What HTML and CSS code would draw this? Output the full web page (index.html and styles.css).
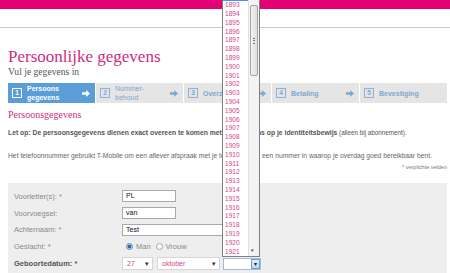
FILE: index.html
```html
<!DOCTYPE html>
<html lang="nl">
<head>
<meta charset="utf-8">
<title>Persoonlijke gegevens</title>
<link rel="stylesheet" href="styles.css">
</head>
<body>
<div class="topbar"></div>
<div class="header"></div>
<main class="content">
  <h1 class="title">Persoonlijke gegevens</h1>
  <p class="subtitle">Vul je gegevens in</p>
  <ol class="steps">
    <li class="step active"><span class="num">1</span><span class="label">Persoons<br>gegevens</span><svg class="arrow" viewBox="0 0 8 7" width="8" height="7"><path d="M0 2.2h4.2V0L8 3.5 4.2 7V4.8H0z"/></svg></li>
    <li class="step"><span class="num">2</span><span class="label thin">Nummer-<br>behoud</span><svg class="arrow" viewBox="0 0 8 7" width="8" height="7"><path d="M0 2.2h4.2V0L8 3.5 4.2 7V4.8H0z"/></svg></li>
    <li class="step"><span class="num">3</span><span class="label">Overzicht</span><svg class="arrow" viewBox="0 0 8 7" width="8" height="7"><path d="M0 2.2h4.2V0L8 3.5 4.2 7V4.8H0z"/></svg></li>
    <li class="step"><span class="num">4</span><span class="label">Betaling</span><svg class="arrow" viewBox="0 0 8 7" width="8" height="7"><path d="M0 2.2h4.2V0L8 3.5 4.2 7V4.8H0z"/></svg></li>
    <li class="step"><span class="num">5</span><span class="label">Bevestiging</span></li>
  </ol>
  <h2 class="section">Persoonsgegevens</h2>
  <p class="note"><b>Let op: De persoonsgegevens dienen exact overeen te komen met de gegevens op je identiteitsbewijs</b> (alleen bij abonnement).</p>
  <p class="info">Het telefoonnummer gebruikt T-Mobile om een aflever afspraak met je te maken. Vul een nummer in waarop je overdag goed bereikbaar bent.</p>
  <p class="required">* verplichte velden</p>
  <form class="panel">
    <div class="row"><span class="lbl">Voorletter(s): *</span><span class="field short">PL</span></div>
    <div class="row"><span class="lbl">Voorvoegsel:</span><span class="field short">van</span></div>
    <div class="row"><span class="lbl">Achternaam: *</span><span class="field long">Test</span></div>
    <div class="row"><span class="lbl">Geslacht: *</span>
      <span class="radios"><span class="radio on"></span><span class="rtext">Man</span><span class="radio"></span><span class="rtext">Vrouw</span></span>
    </div>
    <div class="row"><span class="lbl strong">Geboortedatum: *</span>
      <span class="selects">
        <span class="select day">27<span class="caret">&#9662;</span></span>
        <span class="select month">oktober<span class="caret">&#9662;</span></span>
        <span class="select year"><span class="btn">&#9662;</span></span>
      </span>
    </div>
  </form>
</main>
<div class="year-list">
  <ul class="years">
    <li class="sel">1892</li>
    <li>1893</li><li>1894</li><li>1895</li><li>1896</li><li>1897</li><li>1898</li><li>1899</li><li>1900</li>
    <li>1901</li><li>1902</li><li>1903</li><li>1904</li><li>1905</li><li>1906</li><li>1907</li><li>1908</li>
    <li>1909</li><li>1910</li><li>1911</li><li>1912</li><li>1913</li><li>1914</li><li>1915</li><li>1916</li>
    <li>1917</li><li>1918</li><li>1919</li><li>1920</li><li>1921</li>
  </ul>
  <div class="scrollbar">
    <div class="thumb"><span class="grip"></span></div>
    <span class="down">&#9662;</span>
  </div>
</div>
</body>
</html>
```
FILE: styles.css
```css
html, body {
  margin: 0;
  padding: 0;
  background: #fff;
}
body {
  font-family: "Liberation Sans", Arial, sans-serif;
  color: #666;
  overflow: hidden;
}
.topbar {
  height: 9px;
  background: #e20074;
}
.header {
  height: 18px;
  border-bottom: 1px solid #c9c9c9;
}
.content {
  width: 439px;
  margin-left: 8px;
}
.title {
  margin: 20px 0 0;
  font-family: "Liberation Serif", "Times New Roman", serif;
  font-weight: normal;
  font-size: 17px;
  line-height: 18px;
  color: #cf2c80;
}
.subtitle {
  margin: 0;
  font-family: "Liberation Serif", "Times New Roman", serif;
  font-size: 9.6px;
  line-height: 11px;
  color: #555;
}
.steps {
  list-style: none;
  margin: 6px 0 0;
  padding: 0;
  display: flex;
  gap: 1px;
  height: 20px;
}
.step {
  flex: 1;
  display: flex;
  align-items: center;
  padding: 0 5px 0 4px;
  background: #e5e5e5;
  color: #7ea8d2;
}
.step.active {
  background: #5b9dd6;
  color: #fff;
}
.num {
  width: 8px;
  height: 8px;
  border: 1px solid #8ab1d8;
  font-size: 6.5px;
  font-weight: bold;
  line-height: 8px;
  text-align: center;
}
.step.active .num {
  border-color: #fff;
}
.label {
  margin-left: 5px;
  font-size: 7px;
  font-weight: bold;
  line-height: 9px;
}
.label.thin {
  font-weight: normal;
}
.arrow {
  margin-left: auto;
  fill: currentColor;
}
.step.active .arrow {
  fill: #fff;
}
.section {
  margin: 6px 0 0;
  font-family: "Liberation Serif", "Times New Roman", serif;
  font-weight: normal;
  font-size: 10px;
  line-height: 12px;
  color: #cf2c80;
}
.note {
  margin: 7px 0 0;
  font-size: 6.3px;
  line-height: 9px;
  color: #555;
}
.note b {
  font-size: 6.8px;
}
.info {
  margin: 15px 0 0;
  font-size: 6.75px;
  line-height: 8px;
  color: #666;
}
.required {
  margin: 4px 0 0;
  text-align: right;
  font-size: 5.5px;
  line-height: 7px;
  color: #777;
}
.panel {
  margin-top: 12px;
  background: #eeeeee;
  padding: 5px 6px 20px;
}
.row {
  display: grid;
  grid-template-columns: 108px auto;
  align-items: center;
  height: 16.8px;
}
.lbl {
  font-size: 7.5px;
  color: #8a8a8a;
}
.lbl.strong {
  font-weight: bold;
  color: #555;
}
.field {
  box-sizing: border-box;
  height: 12px;
  border: 1px solid #a9a9a9;
  background: #fff;
  padding: 0 3px;
  font-size: 7px;
  line-height: 10px;
  color: #111;
}
.field.short {
  width: 54px;
}
.field.long {
  width: 118px;
}
.radios {
  display: flex;
  align-items: center;
  padding-left: 4px;
}
.radio {
  box-sizing: border-box;
  width: 7px;
  height: 7px;
  border-radius: 50%;
  border: 1px solid #aaa;
  background: #fafafa;
}
.radio.on {
  border-color: #6d8fb5;
  background: radial-gradient(circle, #2c69b0 0 1.6px, #a9c4e3 2px);
}
.rtext {
  margin: 0 5px 0 3px;
  font-size: 7.5px;
  color: #8a8a8a;
}
.selects {
  display: flex;
  align-items: center;
}
.select {
  position: relative;
  box-sizing: border-box;
  height: 13px;
  background: #fff;
  border: 1px solid #d6d6d6;
  padding-left: 4px;
  font-size: 7px;
  line-height: 11px;
  color: #d4458e;
}
.select.day {
  width: 31px;
}
.select.month {
  width: 63px;
  margin-left: 4px;
}
.select.year {
  width: 38px;
  margin-left: 3px;
  border-color: #9fbcd9;
  height: 12px;
  margin-top: 1px;
}
.caret {
  position: absolute;
  right: 3px;
  top: 0;
  color: #333;
  font-size: 7px;
}
.btn {
  position: absolute;
  right: 0;
  top: 0;
  bottom: 0;
  width: 9px;
  box-sizing: border-box;
  border: 1px solid #6f9fcf;
  background: linear-gradient(#e3effb, #bcd6ef);
  color: #222;
  font-size: 6px;
  line-height: 9px;
  text-align: center;
}
.year-list {
  position: absolute;
  left: 222px;
  top: 0;
  width: 38px;
  height: 257px;
  box-sizing: border-box;
  border: 1px solid #7f7f7f;
  border-top: none;
  background: #fff;
  overflow: hidden;
}
.years {
  list-style: none;
  margin: -7.5px 0 0;
  padding: 0;
}
.years li {
  height: 8.8px;
  line-height: 8.8px;
  padding-left: 2px;
  font-size: 6.6px;
  color: #d4458e;
}
.years li.sel {
  background: #3399ff;
  color: #fff;
}
.scrollbar {
  position: absolute;
  top: 0;
  right: 0;
  bottom: 0;
  width: 10px;
  background: #f3f3f3;
  border-left: 1px solid #e2e2e2;
}
.thumb {
  position: absolute;
  top: 5px;
  left: 1px;
  right: 1px;
  height: 71px;
  box-sizing: border-box;
  border: 1px solid #a5a5a5;
  border-radius: 2px;
  background: linear-gradient(90deg, #f4f4f4, #dedede);
}
.grip {
  position: absolute;
  left: 2px;
  right: 2px;
  top: 32px;
  height: 4px;
  border-top: 1px solid #777;
  border-bottom: 1px solid #777;
}
.grip::after {
  content: "";
  position: absolute;
  left: 0;
  right: 0;
  top: 1px;
  border-top: 1px solid #777;
}
.down {
  position: absolute;
  bottom: 3px;
  left: 2px;
  font-size: 5px;
  color: #444;
}
```
